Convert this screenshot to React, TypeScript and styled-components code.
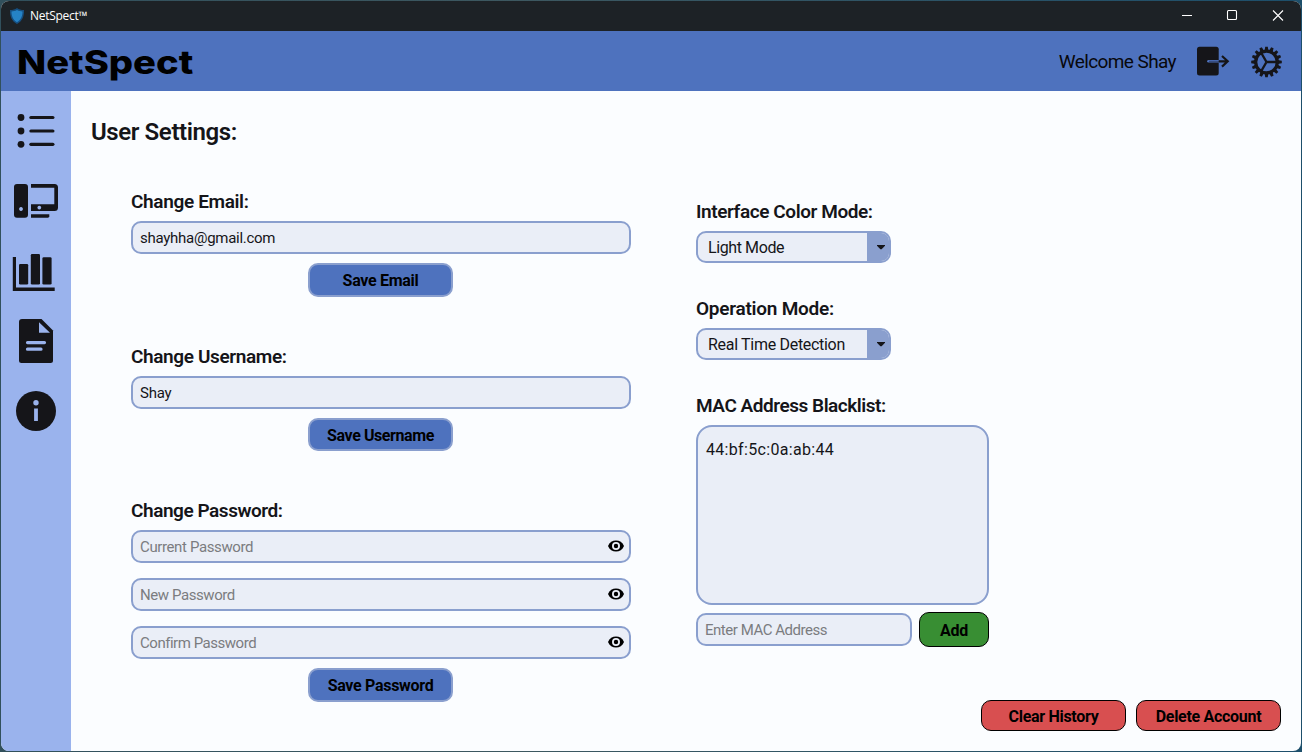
import React from "react";
import styled, { createGlobalStyle } from "styled-components";

const c = {
  title: "#1d2226",
  header: "#4e72be",
  side: "#9ab3ed",
  page: "#fbfdff",
  field: "#eaeef7",
  line: "#8a9fce",
  ink: "#151519",
};

const Global = createGlobalStyle`
  * { box-sizing: border-box; }
  body { margin: 0; background: linear-gradient(90deg, #31505c, #3d5860 40%, #1d4f6b); overflow: hidden; }
  body, input, button { font-family: "Roboto", "Liberation Sans", sans-serif; }
  svg { display: block; }
`;

const Desktop = styled.div`
  width: 1302px;
  height: 752px;
  padding: 1px;
`;
const Window = styled.div`
  height: 750px;
  border-radius: 8px;
  overflow: hidden;
  display: flex;
  flex-direction: column;
  background: ${c.page};
`;
const TitleBar = styled.div`
  height: 30px;
  flex: none;
  display: flex;
  align-items: center;
  padding-left: 8px;
  background: ${c.title};
  color: #fff;
  font: 12px/30px "Open Sans", sans-serif;
`;
const TitleText = styled.span`
  margin-left: 5px;
  flex: 1;
  letter-spacing: -0.27px;
`;
const Header = styled.header`
  height: 60px;
  flex: none;
  display: flex;
  align-items: center;
  padding: 0 18px 0 16px;
  background: ${c.header};
`;
const Brand = styled.div`
  flex: 1;
  font: 800 33px/60px "Inter", sans-serif;
  color: #000;
  transform: scaleX(1.155);
  transform-origin: left;
  padding-top: 1px;
`;
const Welcome = styled.div`
  font-size: 19px;
  line-height: 60px;
  padding-top: 2px;
  margin-right: 20px;
  color: #08080c;
  letter-spacing: -0.6px;
`;
const GearSlot = styled.div`
  margin: 1px 0 0 21px;
`;
const Body = styled.div`
  flex: 1;
  display: flex;
`;
const Sidebar = styled.nav`
  width: 70px;
  padding-top: 5px;
  background: ${c.side};
`;
const Main = styled.main`
  flex: 1;
  display: flex;
  flex-direction: column;
  padding: 26px 20px 20px;
  color: ${c.ink};
`;
const PageTitle = styled.h1`
  margin: 0;
  font-size: 24px;
  line-height: 30px;
  height: 30px;
  font-weight: 600;
  letter-spacing: -0.4px;
`;
const Columns = styled.div`
  flex: 1;
  display: flex;
  align-items: flex-start;
  gap: 65px;
  padding: 42px 0 0 40px;
`;
const LeftColumn = styled.div`
  width: 500px;
  display: flex;
  flex-direction: column;
  gap: 47px;
`;
const RightColumn = styled.div`
  width: 293px;
  padding-top: 10px;
  display: flex;
  flex-direction: column;
  gap: 33px;
`;
const Section = styled.section`
  display: flex;
  flex-direction: column;
`;
const Label = styled.h2<{ $track?: number }>`
  margin: 0 0 7px;
  font-size: 19px;
  line-height: 25px;
  font-weight: 600;
  white-space: nowrap;
  letter-spacing: ${(p) => p.$track ?? -0.35}px;
`;
const Field = styled.div`
  height: 33px;
  display: flex;
  align-items: center;
  border: 2px solid ${c.line};
  border-radius: 10px;
  background: ${c.field};
  padding: 0 5px 0 7px;
`;
const PasswordStack = styled.div`
  display: flex;
  flex-direction: column;
  gap: 15px;
`;
const Input = styled.input<{ $track?: number }>`
  flex: 1;
  min-width: 0;
  border: 0;
  outline: 0;
  padding: 1px 0 0;
  background: transparent;
  color: ${c.ink};
  font-size: 15px;
  line-height: 20px;
  letter-spacing: ${(p) => p.$track ?? -0.27}px;
  &::placeholder { color: #7b7c80; opacity: 1; }
`;
const Button = styled.button<{ $h?: number; $track?: number }>`
  width: 145px;
  height: ${(p) => p.$h ?? 34}px;
  padding: 1px 0 0;
  border: 2px solid ${c.line};
  border-radius: 10px;
  background: ${c.header};
  color: #000;
  font-size: 16px;
  font-weight: 700;
  letter-spacing: ${(p) => p.$track ?? -0.3}px;
  white-space: nowrap;
`;
const SaveButton = styled(Button)`
  align-self: center;
  margin: 9px 1px 0 0;
`;
const AddButton = styled(Button)`
  width: 70px;
  border: 1px solid #000;
  background: #388e33;
`;
const DangerButton = styled(Button)`
  border: 1px solid #000;
  background: #d84f50;
`;
const Select = styled.div<{ $track?: number }>`
  width: 195px;
  height: 32px;
  display: flex;
  border: 2px solid ${c.line};
  border-radius: 10px;
  background: ${c.field};
  overflow: hidden;
  padding-left: 10px;
  font-size: 16px;
  line-height: 29px;
  letter-spacing: ${(p) => p.$track ?? 0}px;
`;
const SelectValue = styled.span`
  flex: 1;
`;
const SelectArrow = styled.span`
  width: 22px;
  display: flex;
  align-items: center;
  justify-content: center;
  padding-left: 6px;
  background: ${c.line};
`;
const List = styled.div`
  height: 180px;
  border: 2px solid ${c.line};
  border-radius: 16px;
  background: ${c.field};
  padding: 12px 8px;
  font-size: 16px;
  line-height: 21px;
  letter-spacing: 0.32px;
`;
const AddRow = styled.div`
  display: flex;
  align-items: center;
  gap: 7px;
  margin-top: 7px;
`;
const MacField = styled(Field)`
  width: 216px;
`;
const Footer = styled.footer`
  display: flex;
  justify-content: flex-end;
  gap: 10px;
  margin-top: -2px;
`;

const Shield = () => (
  <svg width="16" height="18" viewBox="0 0 16 18">
    <path d="M8 1C10 2.5 12 3 15 3C15.3 9 13.5 14 8 17C2.5 14 .7 9 1 3C4 3 6 2.5 8 1Z" fill="#164f80" />
    <path d="M8 3C10 4 11.5 4.4 13.5 4.5C13.5 9 12 13 8 15.2C4 13 2.5 9 2.5 4.5C4.500 4.400 6 4 8 3Z" fill="#2583c6" />
  </svg>
);
const Caption = () => (
  <svg width="120" height="30" viewBox="0 0 120 30" fill="none" stroke="#fff" strokeWidth="1.1">
    <path d="M1 14.500H11" />
    <rect x="46.500" y="9.500" width="9" height="9" rx="1" />
    <path d="M92 9.500L102 19.500M102 9.500L92 19.500" />
  </svg>
);
const ExitIcon = () => (
  <svg width="34" height="30" viewBox="0 0 34 30">
    <rect x="1" y="0.800" width="21.700" height="28.600" rx="2.500" fill={c.ink} />
    <path d="M12.500 15.300H23" stroke={c.header} strokeWidth="2.600" strokeLinecap="round" />
    <path d="M13 15.300H23" stroke="#2b3a5f" strokeWidth="0.800" />
    <path d="M22.700 15.300H31.700M26 10L31.700 15.300L26 20.600" stroke={c.ink} strokeWidth="2.200" fill="none" />
  </svg>
);
const GearIcon = () => (
  <svg width="32" height="32" viewBox="-15.500 -16 32 32" stroke={c.ink} fill="none">
    {Array.from({ length: 16 }, (_, i) => (
      <path key={i} d="M11 -1.900L15.300 -1.300V1.300L11 1.900Z" fill={c.ink} stroke="none" transform={`rotate(${i * 22.5})`} />
    ))}
    <circle r="10.800" strokeWidth="3.200" />
    <path d="M0 0H10M0 0L-5.200 -9M0 0L-5.200 9" strokeWidth="2.400" />
  </svg>
);
const Cell = ({ children }: { children: React.ReactNode }) => (
  <svg width="70" height="70" viewBox="0 0 70 70" fill={c.ink}>
    {children}
  </svg>
);
const ListIcon = () => (
  <Cell>
    {[21.5, 35, 48.300].map((y) => (
      <g key={y}>
        <circle cx="20" cy={y} r="3.400" />
        <rect x="28.300" y={y - 1.6} width="25.200" height="3.200" rx="1.600" />
      </g>
    ))}
  </Cell>
);
const DevicesIcon = () => (
  <Cell>
    <path
      fillRule="evenodd"
      d="M16 18H24Q27 18 27 21V48.700Q27 51.700 24 51.700H16Q13 51.700 13 48.700V21Q13 18 16 18ZM20 41.100a1.900 1.900 0 1 0 .01 0Z"
    />
    <path
      fillRule="evenodd"
      d="M30 18H53.500Q57 18 57 21.500V41.500Q57 45 53.500 45H30V38.300H53.300V21.700H30ZM38.300 39.700a1.900 1.900 0 1 0 .01 0Z"
    />
    <path d="M30 48.300H48.300V50.500L47.300 51.700H30Z" />
  </Cell>
);
const ChartIcon = () => (
  <Cell>
    <path d="M11.800 21H15V51.500H53.700V55H11.800Z" />
    <rect x="18" y="28" width="9.200" height="20.500" rx="1.300" />
    <rect x="29.800" y="18" width="9.200" height="30.500" rx="1.300" />
    <rect x="41.400" y="21.300" width="9.200" height="27.200" rx="1.300" />
  </Cell>
);
const DocIcon = () => (
  <Cell>
    <path d="M21 13H40.500L52 24.500V54.500Q52 57 49.500 57H20.500Q18 57 18 54.500V16Q18 13 21 13Z" />
    <path d="M38 16.300V26.800H49Z" fill={c.side} />
    <path d="M26.500 36.600H43.500M26.500 43.200H40" stroke={c.side} strokeWidth="3.200" strokeLinecap="round" />
  </Cell>
);
const InfoIcon = () => (
  <Cell>
    <circle cx="35" cy="35" r="20" />
    <circle cx="35" cy="26.800" r="2.700" fill={c.side} />
    <rect x="33.100" y="32.500" width="3.800" height="12.500" fill={c.side} />
  </Cell>
);
const EyeIcon = () => (
  <svg width="16" height="14" viewBox="0 0 16 14">
    <path d="M0 6C1.500 2.300 4.500 0.500 8 0.500S14.500 2.300 16 6C14.500 9.700 11.500 11.500 8 11.500S1.500 9.700 0 6Z" fill="#000" />
    <circle cx="8" cy="6" r="3.100" fill="none" stroke={c.field} strokeWidth="1.800" />
  </svg>
);
const Caret = () => (
  <svg width="8" height="5" viewBox="0 0 8 5">
    <path d="M0 0H8V.8L4.600 4.200H3.400L0 .8Z" fill={c.ink} />
  </svg>
);

const passwordFields = [
  { text: "Current Password", track: -0.38 },
  { text: "New Password", track: -0.42 },
  { text: "Confirm Password", track: -0.47 },
];

export default function App() {
  return (
    <Desktop>
      <Global />
      <Window>
        <TitleBar>
          <Shield />
          <TitleText>NetSpect™</TitleText>
          <Caption />
        </TitleBar>
        <Header>
          <Brand>NetSpect</Brand>
          <Welcome>Welcome Shay</Welcome>
          <ExitIcon />
          <GearSlot>
            <GearIcon />
          </GearSlot>
        </Header>
        <Body>
          <Sidebar>
            <ListIcon />
            <DevicesIcon />
            <ChartIcon />
            <DocIcon />
            <InfoIcon />
          </Sidebar>
          <Main>
            <PageTitle>User Settings:</PageTitle>
            <Columns>
              <LeftColumn>
                <Section>
                  <Label>Change Email:</Label>
                  <Field>
                    <Input defaultValue="shayhha@gmail.com" />
                  </Field>
                  <SaveButton>Save Email</SaveButton>
                </Section>
                <Section>
                  <Label $track={-0.38}>Change Username:</Label>
                  <Field>
                    <Input defaultValue="Shay" />
                  </Field>
                  <SaveButton $h={33} $track={-0.42}>Save Username</SaveButton>
                </Section>
                <Section>
                  <Label $track={-0.45}>Change Password:</Label>
                  <PasswordStack>
                    {passwordFields.map(({ text, track }) => (
                      <Field key={text}>
                        <Input placeholder={text} $track={track} />
                        <EyeIcon />
                      </Field>
                    ))}
                  </PasswordStack>
                  <SaveButton>Save Password</SaveButton>
                </Section>
              </LeftColumn>
              <RightColumn>
                <Section>
                  <Label $track={-0.42}>Interface Color Mode:</Label>
                  <Select $track={-0.4}>
                    <SelectValue>Light Mode</SelectValue>
                    <SelectArrow>
                      <Caret />
                    </SelectArrow>
                  </Select>
                </Section>
                <Section>
                  <Label $track={-0.25}>Operation Mode:</Label>
                  <Select $track={-0.3}>
                    <SelectValue>Real Time Detection</SelectValue>
                    <SelectArrow>
                      <Caret />
                    </SelectArrow>
                  </Select>
                </Section>
                <Section>
                  <Label $track={-0.47}>MAC Address Blacklist:</Label>
                  <List>44:bf:5c:0a:ab:44</List>
                  <AddRow>
                    <MacField>
                      <Input placeholder="Enter MAC Address" $track={-0.47} />
                    </MacField>
                    <AddButton $h={35}>Add</AddButton>
                  </AddRow>
                </Section>
              </RightColumn>
            </Columns>
            <Footer>
              <DangerButton $h={31}>Clear History</DangerButton>
              <DangerButton $h={31}>Delete Account</DangerButton>
            </Footer>
          </Main>
        </Body>
      </Window>
    </Desktop>
  );
}
